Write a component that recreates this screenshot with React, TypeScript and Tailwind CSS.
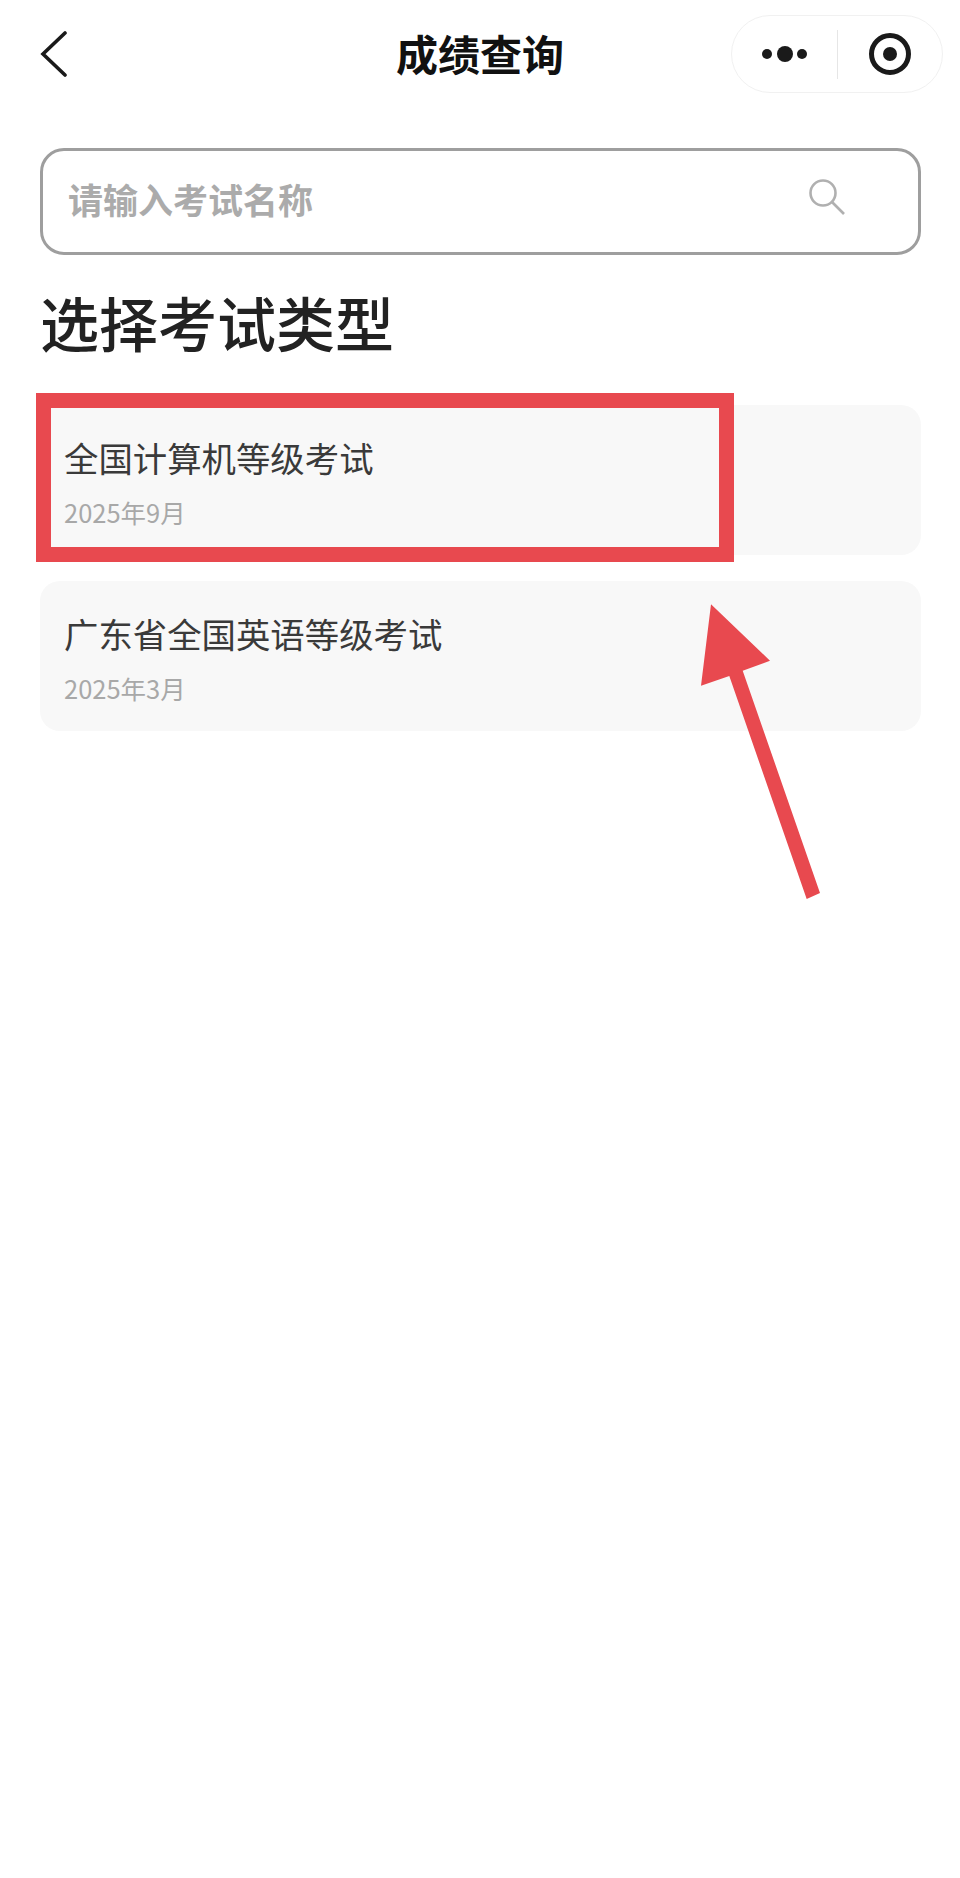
import React from "react";

function ExamCard({ title, date }: { title: string; date: string }) {
  return (
    <div className="flex h-[150px] flex-col rounded-[20px] bg-[#f8f8f8] pl-[24px] pt-[27px]">
      <div className="text-[34.4px] leading-[50px] text-[#3a3a3a]">{title}</div>
      <div className="mt-[12px] text-[25.5px] leading-[36px] text-[#a8a8a8]">{date}</div>
    </div>
  );
}

export default function App() {
  return (
    <div className="relative h-[1878px] w-[960px] overflow-hidden bg-white font-['Noto_Sans_CJK_SC','Noto_Sans',sans-serif]">
      <header className="relative flex h-[148px] items-start justify-between pl-[40px] pr-[17px] pt-[15px]">
        <svg width="28" height="46" viewBox="0 0 28 46" className="mt-[16px]" fill="none">
          <path d="M25 2 L3 23 L25 44" stroke="#1a1a1a" strokeWidth="3.6" strokeLinecap="round" />
        </svg>
        <h1 className="absolute left-0 right-0 top-[27px] text-center text-[42px] font-bold leading-[52px] text-[#111111]">成绩查询</h1>
        <div className="flex h-[78px] w-[212px] items-center rounded-[39px] border border-[#f1f1f1] bg-white">
          <div className="flex w-[105px] items-center justify-center gap-[4.5px]">
            <span className="h-[10px] w-[10px] rounded-full bg-[#1a1a1a]" />
            <span className="h-[16px] w-[16px] rounded-full bg-[#1a1a1a]" />
            <span className="h-[10px] w-[10px] rounded-full bg-[#1a1a1a]" />
          </div>
          <div className="h-[49px] w-px bg-[#e6e6e6]" />
          <div className="flex flex-1 items-center justify-center">
            <div className="flex h-[42px] w-[42px] items-center justify-center rounded-full border-[5px] border-[#1a1a1a]">
              <span className="h-[14px] w-[14px] rounded-full bg-[#1a1a1a]" />
            </div>
          </div>
        </div>
      </header>

      <main className="pl-[40px] pr-[39px]">
        <div className="flex h-[107px] items-center justify-between rounded-[24px] border-[3.5px] border-[#9e9e9e] pl-[25px] pr-[72px]">
          <span className="-mt-[5px] text-[35px] font-bold leading-[50px] text-[#ababab]">请输入考试名称</span>
          <svg width="38" height="36" viewBox="0 0 38 36" fill="none" className="-mt-[10px]">
            <circle cx="15" cy="14" r="12.5" stroke="#b0b0b0" strokeWidth="2.6" />
            <path d="M24 23 L36 35" stroke="#b0b0b0" strokeWidth="2.6" />
          </svg>
        </div>

        <h2 className="mt-[29px] text-[59px] font-medium leading-[76px] text-[#222222]">选择考试类型</h2>

        <div className="mt-[45px] flex flex-col gap-[26px]">
          <ExamCard title="全国计算机等级考试" date="2025年9月" />
          <ExamCard title="广东省全国英语等级考试" date="2025年3月" />
        </div>
      </main>

      <div className="absolute left-[36px] top-[393px] h-[169px] w-[698px] border-[15px] border-[#e8494f]" />
      <svg className="absolute left-0 top-0" width="960" height="1878" fill="none">
        <polygon points="711,604.3 770,660.7 742.7,670.7 820,893 806.7,899 729.3,676 701,685.7" fill="#e8494f" />
      </svg>
    </div>
  );
}
